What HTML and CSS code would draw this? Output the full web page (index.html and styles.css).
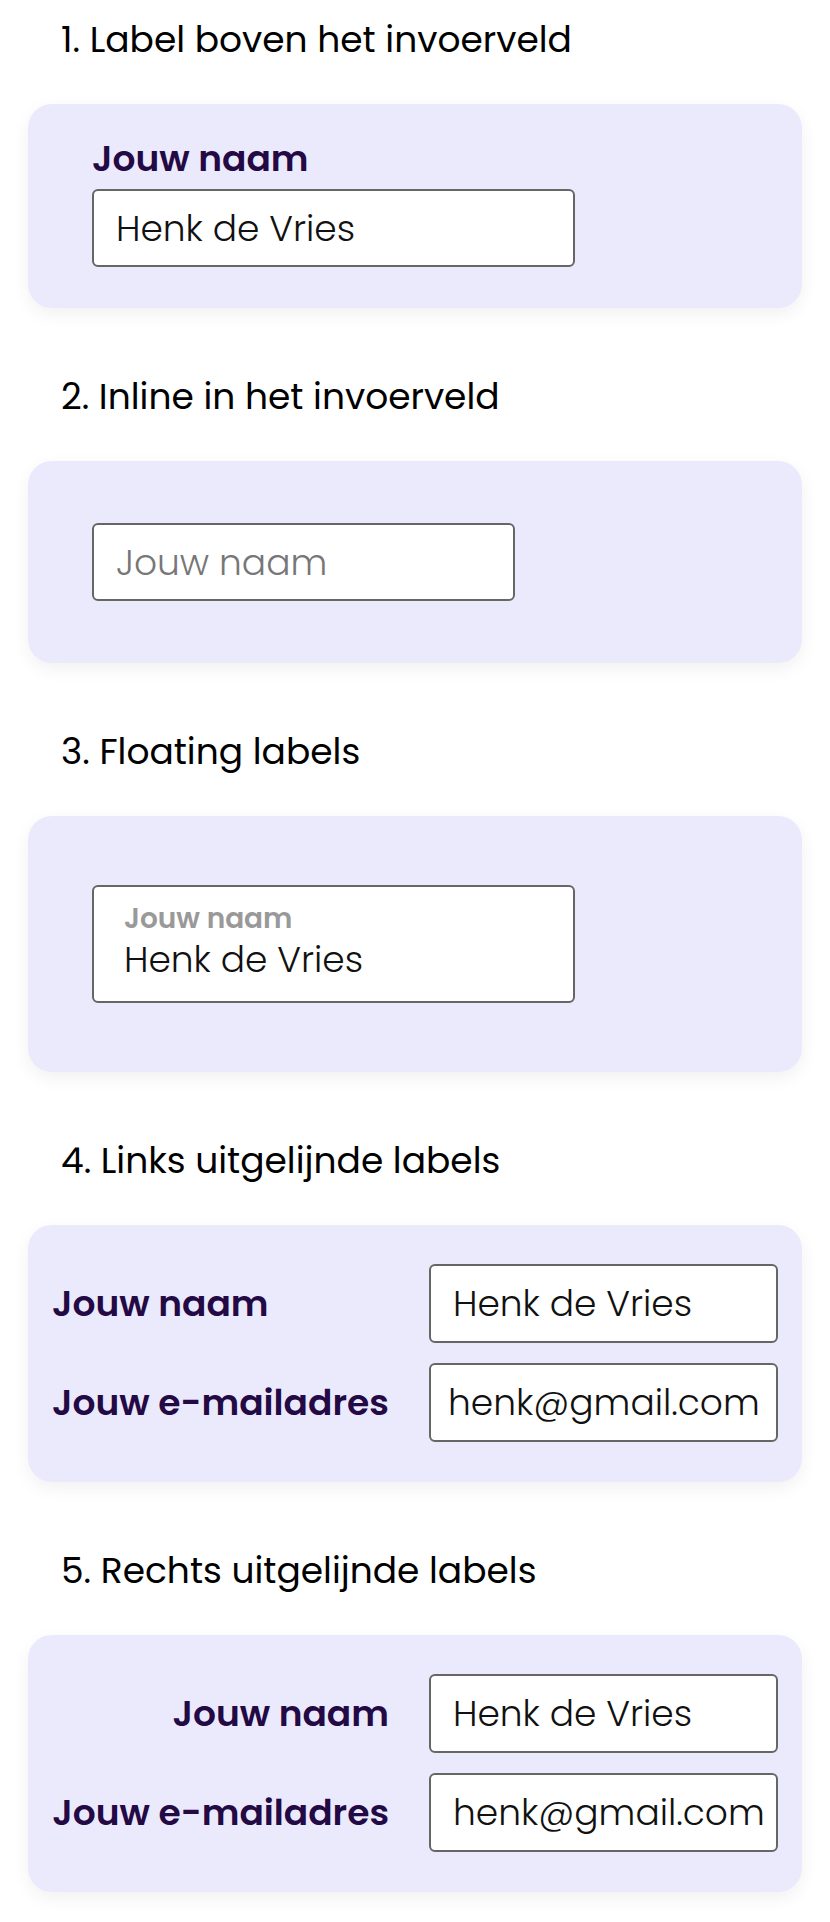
FILE: index.html
```html
<!DOCTYPE html>
<html lang="nl">
<head>
    <meta charset="UTF-8">
    <meta name="viewport" content="width=device-width, initial-scale=1.0">
    <title>Labels bij invoervelden</title>
    <link rel="stylesheet" href="styles.css">
</head>
<body>
    <div class="page">
        <section class="example">
            <h2>1. Label boven het invoerveld</h2>
            <div class="card card-top">
                <label class="label" for="naam-1">Jouw naam</label>
                <input class="field" id="naam-1" type="text" value="Henk de Vries" />
            </div>
        </section>

        <section class="example">
            <h2>2. Inline in het invoerveld</h2>
            <div class="card card-inline">
                <input class="field field-short" type="text" placeholder="Jouw naam" aria-label="Jouw naam" />
            </div>
        </section>

        <section class="example">
            <h2>3. Floating labels</h2>
            <div class="card card-floating">
                <div class="floating">
                    <label class="floating-label" for="naam-3">Jouw naam</label>
                    <input class="floating-input" id="naam-3" type="text" value="Henk de Vries" />
                </div>
            </div>
        </section>

        <section class="example">
            <h2>4. Links uitgelijnde labels</h2>
            <div class="card card-grid">
                <label class="label" for="naam-4">Jouw naam</label>
                <input class="field" id="naam-4" type="text" value="Henk de Vries" />
                <label class="label" for="mail-4">Jouw e-mailadres</label>
                <input class="field field-email field-scrolled" id="mail-4" type="email" value="henk@gmail.com" />
            </div>
        </section>

        <section class="example">
            <h2>5. Rechts uitgelijnde labels</h2>
            <div class="card card-grid align-right">
                <label class="label" for="naam-5">Jouw naam</label>
                <input class="field" id="naam-5" type="text" value="Henk de Vries" />
                <label class="label" for="mail-5">Jouw e-mailadres</label>
                <input class="field field-email" id="mail-5" type="email" value="henk@gmail.com" />
            </div>
        </section>
    </div>
</body>
</html>
```

FILE: styles.css
```css
body {
    font-family: 'Poppins', 'Inter', sans-serif;
    background-color: #fff;
    color: #000;
    margin: 0;
    padding: 0;
}
.page {
    padding: 16px 28px 30px;
}
.example {
    margin-bottom: 65px;
}
.example h2 {
    font-size: 36px;
    font-weight: 400;
    line-height: 48px;
    margin: 0 0 40px 33px;
}
.card {
    background-color: #ebe9fc;
    border-radius: 24px;
    box-shadow: 0 6px 18px rgba(0, 0, 0, 0.06);
}
.card-top {
    display: flex;
    flex-direction: column;
    align-items: flex-start;
    padding: 36px 64px 41px;
}
.card-top .label {
    line-height: 38px;
    margin-bottom: 11px;
}
.card-inline {
    padding: 62px 64px;
}
.card-floating {
    padding: 69px 64px;
}
.label {
    color: #230a45;
    font-size: 36px;
    font-weight: 600;
    white-space: nowrap;
}
.field {
    box-sizing: border-box;
    width: 483px;
    height: 78px;
    padding: 0 22px;
    font-family: inherit;
    font-size: 36px;
    font-weight: 300;
    color: #111;
    background-color: #fff;
    border: 2px solid #666;
    border-radius: 6px;
    outline: none;
}
.field::placeholder {
    color: #777;
}
.field-short {
    width: 423px;
}
.floating {
    box-sizing: border-box;
    width: 483px;
    height: 118px;
    padding: 15px 30px 0;
    background-color: #fff;
    border: 2px solid #666;
    border-radius: 6px;
    display: flex;
    flex-direction: column;
}
.floating-label {
    color: #999;
    font-size: 28px;
    font-weight: 600;
    line-height: 34px;
}
.floating-input {
    border: none;
    outline: none;
    padding: 0;
    margin-top: 2px;
    font-family: inherit;
    font-size: 36px;
    font-weight: 300;
    color: #111;
    line-height: 44px;
}
.card-grid {
    display: grid;
    grid-template-columns: 1fr 349px;
    column-gap: 40px;
    row-gap: 20px;
    align-items: center;
    padding: 39px 24px 40px;
}
.card-grid .field {
    width: 100%;
    height: 79px;
}
/* long addresses run right up to the border */
.field-email {
    padding-right: 0;
}
.field-scrolled {
    padding-left: 17px;
    padding-right: 8px;
}
.align-right .label {
    text-align: right;
}
```
